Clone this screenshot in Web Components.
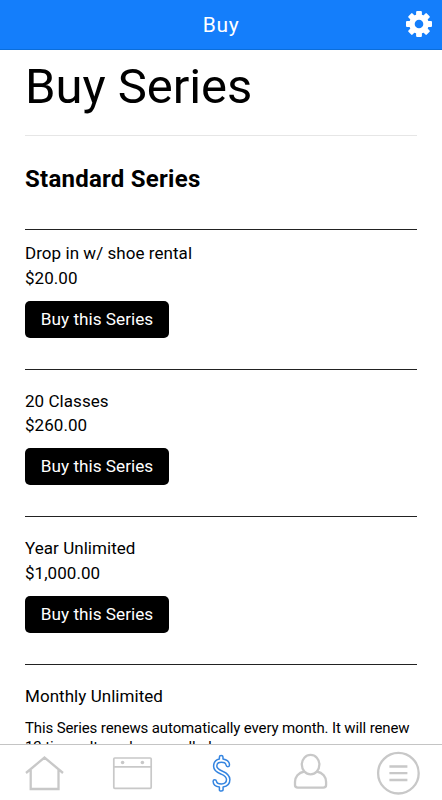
<!DOCTYPE html>
<html lang="en">
<head>
<meta charset="utf-8">
<title>Buy</title>
<style>
html, body { margin: 0; height: 100%; overflow: hidden; background: #fff; }
body { font-family: Roboto, "Liberation Sans", sans-serif; color: #000; }
</style>
</head>
<body>
<buy-app></buy-app>
<script>
const define = (name, html) => customElements.define(name, class extends HTMLElement {
  constructor() {
    super();
    this.attachShadow({ mode: 'open' }).innerHTML = html;
  }
});

define('app-bar', `<style>
:host { display: grid; grid-template-columns: 46px 1fr 46px; align-items: center; height: 50px; box-sizing: border-box; background: #147efb; border-bottom: 1px solid #0b6edb; color: #fff; flex: none; }
.title { grid-column: 2; text-align: center; font-size: 21px; line-height: 26px; letter-spacing: .7px; }
svg { display: block; margin: -2px 0 0 9px; }
</style><div class="title"><slot></slot></div>
<svg width="28" height="28" viewBox="-14 -14 28 28"><g fill="#fff"><rect x="-2.9" y="-13" width="5.8" height="26" rx="1"/><rect x="-2.9" y="-13" width="5.8" height="26" rx="1" transform="rotate(45)"/><rect x="-2.9" y="-13" width="5.8" height="26" rx="1" transform="rotate(90)"/><rect x="-2.9" y="-13" width="5.8" height="26" rx="1" transform="rotate(135)"/><circle r="9.8"/></g><circle r="4.3" fill="#147efb"/></svg>`);

define('buy-button', `<style>
:host { display: flex; align-items: center; justify-content: center; box-sizing: border-box; width: 144px; height: 37px; padding-bottom: 1.5px; border-radius: 5px; background: #000; color: #fff; font-size: 17.2px; line-height: 24px; letter-spacing: 0; }
</style><slot></slot>`);

define('series-item', `<style>
:host { display: block; box-sizing: border-box; height: 147.5px; border-top: 1px solid #222; padding-top: 19.3px; font-size: 17px; line-height: 24.5px; letter-spacing: .05px; }
:host([first]) { height: 140px; padding-top: 11.8px; }
.name, .price { white-space: nowrap; }
::slotted(buy-button) { margin-top: 10.4px; }
</style><div class="name"><slot name="name"></slot></div><div class="price"><slot name="price"></slot></div><slot></slot>`);

define('series-note', `<style>
:host { display: block; font-size: 15px; line-height: 19.5px; padding-top: 10.3px; letter-spacing: -.125px; white-space: nowrap; }
</style><slot></slot>`);

define('tab-bar', `<style>
:host { display: grid; grid-template-columns: repeat(5, 88.4px); height: 56px; box-sizing: border-box; border-top: 1px solid #c4c4c4; background: #fff; flex: none; }
svg { width: 88.4px; height: 55px; fill: none; stroke: #c8c8c8; stroke-width: 2.3; display: block; }
</style>
<svg viewBox="0 745 88.4 55"><path d="M26 773 44.5 757.5 63 773M30.7 770V789H58.5V770"/></svg>
<svg viewBox="88.4 745 88.4 55"><rect x="114.2" y="758" width="37.4" height="30.3" rx="1" stroke-width="1.7"/><path d="M114 766.8H152" stroke-width="1.7"/><g fill="#c8c8c8" stroke="none"><circle cx="123" cy="762.5" r="1.8"/><circle cx="142.8" cy="762.5" r="1.8"/></g></svg>
<svg viewBox="176.8 745 88.4 55"><path stroke="#3585e0" stroke-width="1.5" stroke-linejoin="round" d="M219.2 759V757Q219.2 755.5 221 755.5T222.8 757V759C226.5 759.7 229.3 761.7 229.3 765Q229.3 766.7 227.7 766.7T225.9 765.2C225.7 763.1 223.7 762.3 221.2 762.3C218.4 762.3 216.6 763.7 216.6 766C216.6 768.8 219.3 769.7 222.4 771.2C226.7 773.1 229.7 775.1 229.7 779.5C229.7 783.8 226.7 786.4 222.9 787V789.6Q222.9 791.1 221 791.1T219.2 789.6V787.1C215.4 786.6 213 784.4 212.9 781.3Q213 779.8 214.5 779.8T216.3 781.4C216.6 783.2 218.7 784 221.2 784C224.3 784 226.3 782.5 226.3 779.6C226.3 776.4 223.5 775.3 220.6 774C216.4 772.2 213.4 770.4 213.4 766.2C213.4 762.5 215.7 759.8 219.2 759Z"/></svg>
<svg viewBox="265.2 745 88.4 55"><ellipse cx="310.8" cy="764.6" rx="8.8" ry="9.7"/><path d="M304.5 771.5C298.5 772.5 295.2 777 295.2 782V785Q295.2 787.6 298 787.6H323.5Q326.3 787.6 326.3 785V782C326.3 777 323 772.5 317 771.5"/></svg>
<svg viewBox="353.6 745 88.4 55"><circle cx="398" cy="773.2" r="20.3"/><path d="M389 766.5H407M389 773.2H407M389 780H407"/></svg>`);

define('buy-app', `<style>
:host { display: flex; flex-direction: column; width: 442px; height: 800px; overflow: hidden; background: #fff; }
main { flex: 1; min-height: 0; overflow: hidden; padding: 0 25px; }
h1 { margin: 0; box-sizing: border-box; height: 86px; padding-top: 7px; border-bottom: 1px solid #e6e6e6; font-size: 49px; line-height: 60px; font-weight: 400; letter-spacing: -.05px; white-space: nowrap; }
h2 { margin: 0; box-sizing: border-box; height: 92.7px; padding-top: 28.4px; font-size: 24px; line-height: 30px; font-weight: 700; letter-spacing: .25px; white-space: nowrap; }
</style>
<app-bar>Buy</app-bar>
<main>
<h1>Buy Series</h1>
<h2>Standard Series</h2>
<series-item first><span slot="name">Drop in w/ shoe rental</span><span slot="price">$20.00</span><buy-button>Buy this Series</buy-button></series-item>
<series-item><span slot="name">20 Classes</span><span slot="price">$260.00</span><buy-button>Buy this Series</buy-button></series-item>
<series-item><span slot="name">Year Unlimited</span><span slot="price">$1,000.00</span><buy-button>Buy this Series</buy-button></series-item>
<series-item><span slot="name">Monthly Unlimited</span><series-note>This Series renews automatically every month. It will renew<br>12 times. It can be cancelled.</series-note></series-item>
</main>
<tab-bar></tab-bar>`);
</script>
</body>
</html>
